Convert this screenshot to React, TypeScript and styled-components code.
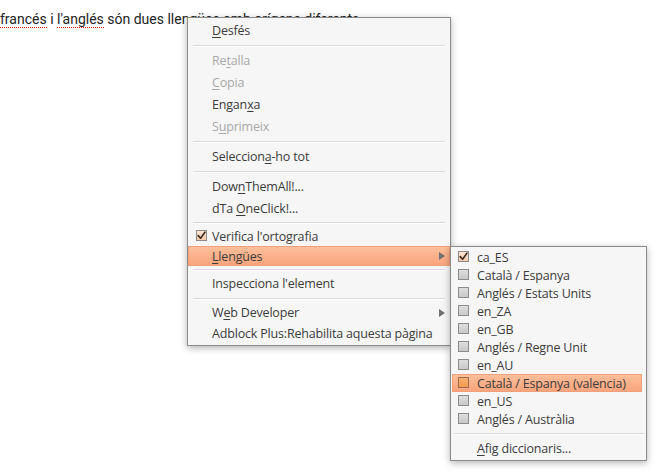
import React from "react";
import styled, { createGlobalStyle } from "styled-components";

const GlobalStyle = createGlobalStyle`
  html, body {
    margin: 0;
    padding: 0;
    background: #ffffff;
  }
`;

const Page = styled.div`
  position: relative;
  width: 661px;
  height: 472px;
  overflow: hidden;
  background: #ffffff;
`;

const Sentence = styled.p`
  margin: 0;
  padding-top: 10px;
  font-family: Roboto, "Liberation Sans", sans-serif;
  font-size: 14px;
  line-height: 18px;
  color: #222;
  white-space: nowrap;
`;

const Misspelled = styled.span`
  display: inline-block;
  line-height: 16px;
  border-bottom: 1px dotted #ff0000;
`;

const Menu = styled.div<{ $left: number; $top: number; $width: number }>`
  position: absolute;
  left: ${(p) => p.$left}px;
  top: ${(p) => p.$top}px;
  width: ${(p) => p.$width}px;
  box-sizing: border-box;
  padding: 1px 0;
  background: #f6f6f6;
  border: 1px solid #8a8a8a;
  box-shadow: 0 2px 7px rgba(0, 0, 0, 0.3);
  font-family: "Open Sans", "Noto Sans", sans-serif;
  font-size: 12.5px;
  letter-spacing: -0.18px;
  color: #3c3c3c;
`;

const Item = styled.div<{
  $h: number;
  $pad: number;
  $active?: boolean;
  $disabled?: boolean;
  $inset?: string;
}>`
  position: relative;
  display: flex;
  align-items: center;
  height: ${(p) => p.$h}px;
  box-sizing: border-box;
  margin: ${(p) => p.$inset || "0"};
  padding-left: ${(p) => p.$pad}px;
  white-space: nowrap;
  color: ${(p) => (p.$disabled ? "#a9a9a9" : "#3c3c3c")};
  background: ${(p) =>
    p.$active ? "linear-gradient(#fcc09c, #f9a37b)" : "transparent"};
  box-shadow: ${(p) => (p.$active ? "inset 0 0 0 1px #f2a07c" : "none")};
`;

const Label = styled.span`
  flex: 1;
`;

const Key = styled.span`
  text-decoration: underline;
  text-underline-offset: 2px;
`;

const Box = styled.span<{ $x: number; $hot?: boolean }>`
  position: absolute;
  left: ${(p) => p.$x}px;
  top: 50%;
  width: 11px;
  height: 11px;
  margin-top: -6px;
  box-sizing: border-box;
  border: 1px solid ${(p) => (p.$hot ? "#9b6c52" : "#8c8c8c")};
  background: ${(p) =>
    p.$hot ? "linear-gradient(#f7b070, #f39a4c)" : "linear-gradient(#dedede, #c9c9c9)"};
  display: flex;
  align-items: center;
  justify-content: center;
`;

const CheckedBox = styled(Box)`
  background: linear-gradient(#fde6d6, #f6c8a8);
`;

const Arrow = styled.span`
  width: 0;
  height: 0;
  margin-right: 5px;
  border-top: 4px solid transparent;
  border-bottom: 4px solid transparent;
  border-left: 6px solid #707070;
`;

const Sep = styled.div<{ $h: number; $inset: number }>`
  height: ${(p) => p.$h}px;
  display: flex;
  align-items: center;
  padding: 0 ${(p) => p.$inset}px;

  &::after {
    content: "";
    flex: 1;
    height: 1px;
    background: #dadada;
    box-shadow: 0 1px 0 #ffffff;
  }
`;

const Tick = () => (
  <svg width="9" height="9" viewBox="0 0 9 9">
    <path
      d="M1.2 4.6 L3.6 7.2 L7.9 1.2"
      fill="none"
      stroke="#3a2a20"
      strokeWidth="1.6"
      strokeLinejoin="round"
      strokeLinecap="round"
    />
  </svg>
);

const languages = [
  "Català / Espanya",
  "Anglés / Estats Units",
  "en_ZA",
  "en_GB",
  "Anglés / Regne Unit",
  "en_AU",
  "Català / Espanya (valencia)",
  "en_US",
  "Anglés / Austràlia",
];

const App = () => {
  return (
    <Page>
      <GlobalStyle />
      <Sentence>
        <Misspelled>francés</Misspelled> i <Misspelled>l'anglés</Misspelled> són
        dues llengües amb orígens diferents
      </Sentence>

      <Menu $left={187} $top={17} $width={264}>
        <Item $h={22} $pad={24}>
          <Label>
            <Key>D</Key>esfés
          </Label>
        </Item>
        <Sep $h={8} $inset={5} />
        <Item $h={22} $pad={24} $disabled>
          <Label>
            Re<Key>t</Key>alla
          </Label>
        </Item>
        <Item $h={22} $pad={24} $disabled>
          <Label>
            <Key>C</Key>opia
          </Label>
        </Item>
        <Item $h={22} $pad={24}>
          <Label>
            Engan<Key>x</Key>a
          </Label>
        </Item>
        <Item $h={22} $pad={24} $disabled>
          <Label>
            S<Key>u</Key>primeix
          </Label>
        </Item>
        <Sep $h={8} $inset={5} />
        <Item $h={22} $pad={24}>
          <Label>
            Seleccion<Key>a</Key>-ho tot
          </Label>
        </Item>
        <Sep $h={8} $inset={5} />
        <Item $h={22} $pad={24}>
          <Label>
            Dow<Key>n</Key>ThemAll!...
          </Label>
        </Item>
        <Item $h={22} $pad={24}>
          <Label>
            dTa <Key>O</Key>neClick!...
          </Label>
        </Item>
        <Sep $h={7} $inset={5} />
        <Item $h={20} $pad={24}>
          <CheckedBox $x={8}>
            <Tick />
          </CheckedBox>
          <Label>Verifica l'ortografia</Label>
        </Item>
        <Item $h={20} $pad={24} $active>
          <Label>
            <Key>L</Key>lengües
          </Label>
          <Arrow />
        </Item>
        <Sep $h={7} $inset={5} />
        <Item $h={21} $pad={24}>
          <Label>Inspecciona l'element</Label>
        </Item>
        <Sep $h={8} $inset={5} />
        <Item $h={21} $pad={24}>
          <Label>
            W<Key>e</Key>b Developer
          </Label>
          <Arrow />
        </Item>
        <Item $h={21} $pad={24}>
          <Label>Adblock Plus:Rehabilita aquesta pàgina</Label>
        </Item>
      </Menu>

      <Menu $left={450} $top={246} $width={197}>
        <Item $h={18} $pad={25} $inset="0 4px 0 1px">
          <CheckedBox $x={6}>
            <Tick />
          </CheckedBox>
          <Label>ca_ES</Label>
        </Item>
        {languages.map((name) => {
          const hot = name === "Català / Espanya (valencia)";
          return (
            <Item key={name} $h={18} $pad={25} $inset="0 4px 0 1px" $active={hot}>
              <Box $x={6} $hot={hot} />
              <Label>{name}</Label>
            </Item>
          );
        })}
        <Sep $h={10} $inset={2} />
        <Item $h={21} $pad={25} $inset="0 4px 0 1px">
          <Label>
            <Key>A</Key>fig diccionaris...
          </Label>
        </Item>
      </Menu>
    </Page>
  );
};

export default App;
